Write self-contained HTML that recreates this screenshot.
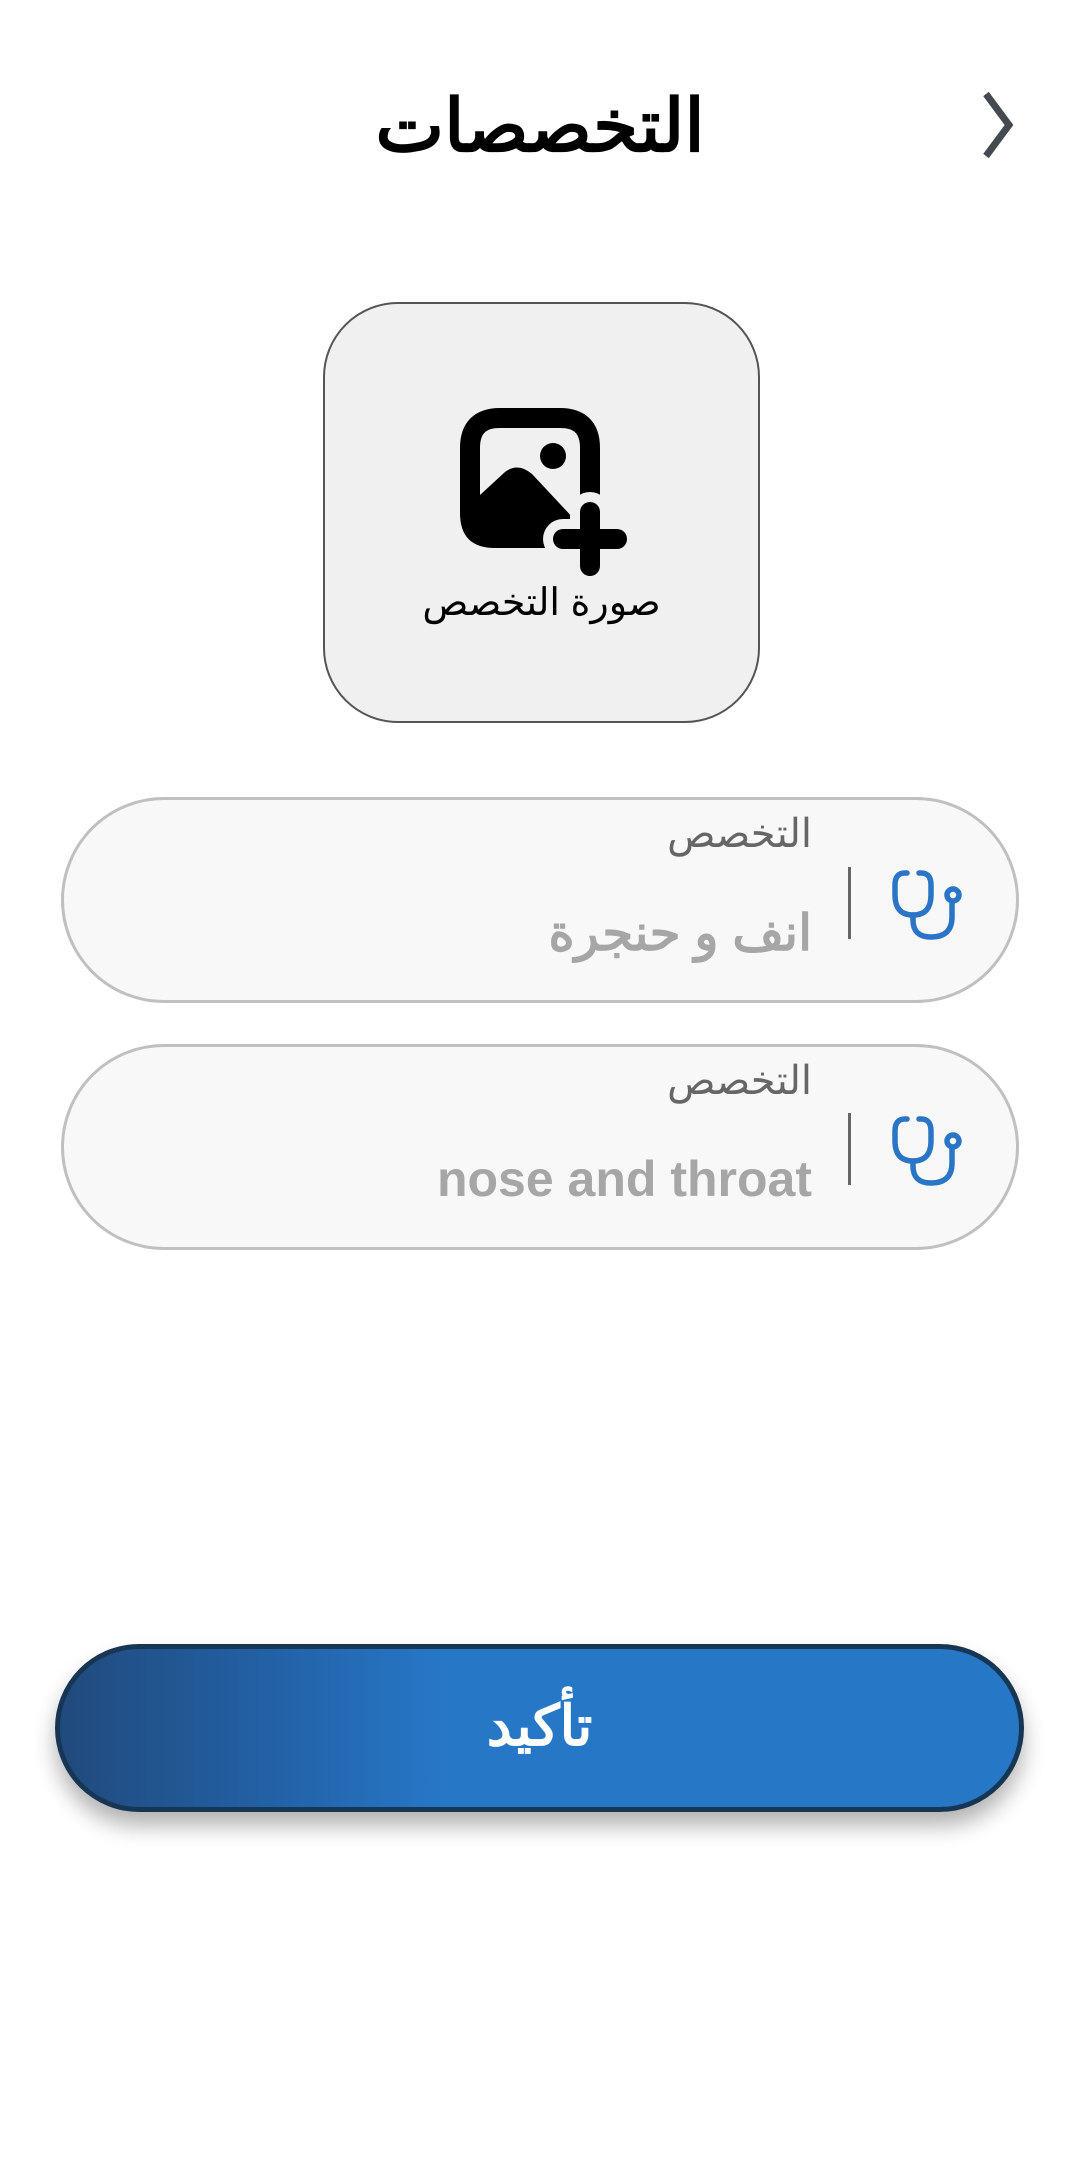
<!DOCTYPE html>
<html><head><meta charset="utf-8"><style>
html,body{margin:0;padding:0;background:#fff;}
body{width:1080px;height:2176px;position:relative;overflow:hidden;font-family:"Liberation Sans","Noto Sans CJK SC",sans-serif;}
.abs{position:absolute;}
.title{left:300px;width:480px;top:72px;text-align:center;font-size:73px;font-weight:bold;color:#000;line-height:110px;direction:rtl;}
.imgbox{left:323px;top:302px;width:437px;height:421px;border:2px solid #555;border-radius:75px;background:#f0f0f0;box-sizing:border-box;}
.field{left:61px;width:958px;height:206px;border:3px solid #c0c0c0;border-radius:103px;background:#f8f8f8;box-sizing:border-box;}
.lbl{right:268px;font-size:40px;color:#666;direction:rtl;line-height:44px;}
.val{right:268px;font-size:50px;color:#a6a6a6;font-weight:bold;direction:rtl;line-height:58px;}
.div{width:3px;height:72px;background:#666;}
.btn{left:55px;top:1644px;width:969px;height:168px;border:5px solid #163654;border-radius:84px;box-sizing:border-box;background:linear-gradient(90deg,#214a7c 0%,#2361a6 22%,#2777c7 40%,#2777c7 100%);box-shadow:0 14px 22px rgba(0,0,0,0.3);color:#fff;font-size:56px;font-weight:bold;text-align:center;line-height:154px;direction:rtl;}
</style></head><body>
<div class="abs title">التخصصات</div>
<svg class="abs" style="left:975px;top:90px" width="50" height="70" viewBox="0 0 50 70"><path d="M11 4 L34 35 L11 66" fill="none" stroke="#454a50" stroke-width="7"/></svg>

<div class="abs imgbox"></div>
<svg class="abs" style="left:450px;top:400px" width="180" height="180" viewBox="0 0 180 180">
<path d="M20 110 V48 Q20 18 50 18 H110 Q140 18 140 48 V95" fill="none" stroke="#000" stroke-width="20" stroke-linecap="round"/>
<path d="M10 95 H30 L55 72 Q68 62 82 74 L125 120 V148 H45 Q10 148 10 113 Z" fill="#000"/>
<circle cx="103" cy="56" r="13" fill="#000"/>
<path d="M140 112 V166 M113 139 H167" stroke="#f0f0f0" stroke-width="40" stroke-linecap="round"/>
<path d="M140 112 V166 M113 139 H167" stroke="#000" stroke-width="20" stroke-linecap="round"/>
</svg>
<div class="abs" style="left:323px;width:437px;top:575px;text-align:center;font-size:38px;color:#000;direction:rtl;line-height:56px;">صورة التخصص</div>

<div class="abs field" style="top:797px"></div>
<div class="abs lbl" style="top:812px">التخصص</div>
<div class="abs val" style="top:904px">انف و حنجرة</div>
<div class="abs div" style="top:867px;left:848px"></div>
<svg class="abs" style="left:880px;top:860px" width="100" height="90" viewBox="880 860 100 90"><g fill="none" stroke="#2a75c5" stroke-width="5.5" stroke-linecap="round"><path d="M907 873 H905 Q895 873 895 885 V895 Q895 915 913 915 Q931 915 931 895 V885 Q931 873 921 873 H919"/><path d="M913 915 V920 Q913 937 931 937 Q952 937 952 917 V902"/><circle cx="953" cy="895" r="6"/></g></svg>

<div class="abs field" style="top:1044px"></div>
<div class="abs lbl" style="top:1059px">التخصص</div>
<div class="abs val" style="top:1150px;direction:ltr">nose and throat</div>
<div class="abs div" style="top:1113px;left:848px"></div>
<svg class="abs" style="left:880px;top:1106px" width="100" height="90" viewBox="880 860 100 90"><g fill="none" stroke="#2a75c5" stroke-width="5.5" stroke-linecap="round"><path d="M907 873 H905 Q895 873 895 885 V895 Q895 915 913 915 Q931 915 931 895 V885 Q931 873 921 873 H919"/><path d="M913 915 V920 Q913 937 931 937 Q952 937 952 917 V902"/><circle cx="953" cy="895" r="6"/></g></svg>

<div class="abs btn">تأكيد</div>
</body></html>
